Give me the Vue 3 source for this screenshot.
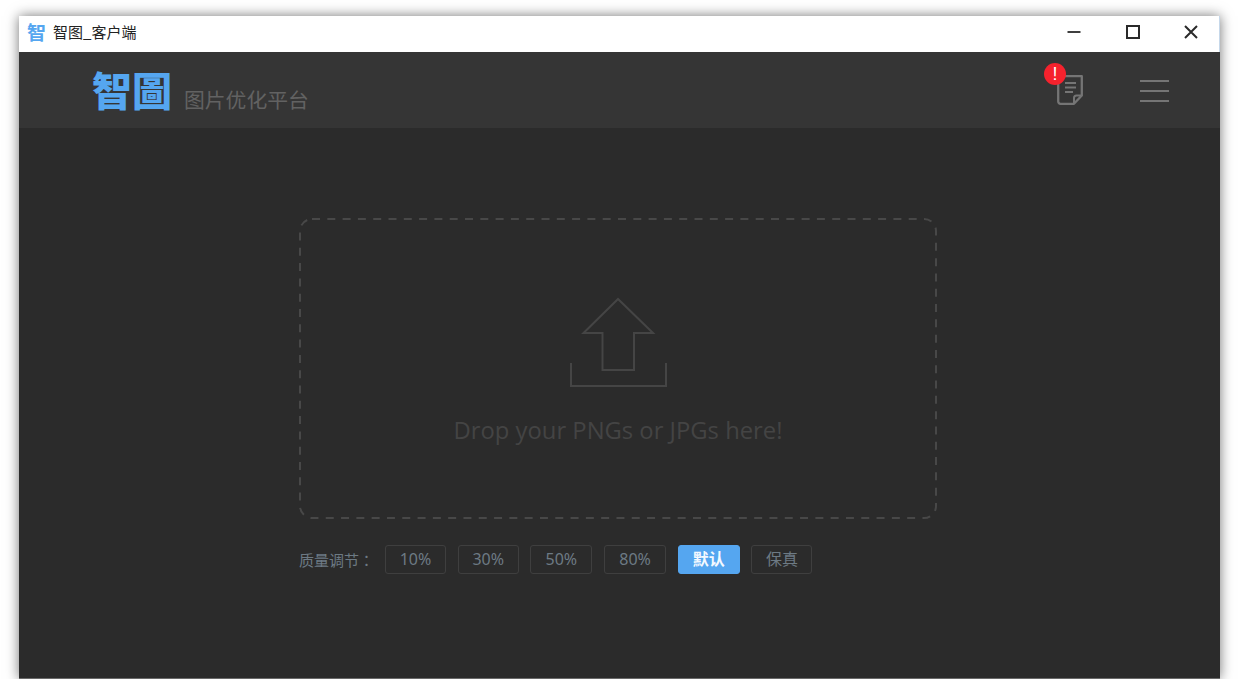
<script setup>
const levels = [
  { label: '10%', width: 61 },
  { label: '30%', width: 61 },
  { label: '50%', width: 62 },
  { label: '80%', width: 62 },
  { label: '默认', width: 62, active: true },
  { label: '保真', width: 61 },
]
</script>

<template>
  <div class="window">
    <div class="titlebar">
      <span class="app-icon">智</span>
      <span class="app-title">智图_客户端</span>
      <div class="controls">
        <svg width="14" height="14" viewBox="0 0 14 14"><path d="M0.5 7H13.5" /></svg>
        <svg width="14" height="14" viewBox="0 0 14 14"><rect x="1" y="1" width="12" height="12" /></svg>
        <svg width="14" height="14" viewBox="0 0 14 14"><path d="M1 1L13 13M13 1L1 13" /></svg>
      </div>
    </div>

    <header class="header">
      <div class="brand">
        <span class="brand-name">智圖</span>
        <span class="brand-sub">图片优化平台</span>
      </div>
      <div class="tools">
        <div class="doc">
          <svg width="26" height="30" viewBox="0 0 26 30" fill="none">
            <path d="M3.500 1.200H24.800V20.500L17 28.800H3.500A2.300 2.300 0 0 1 1.200 26.500V3.500A2.300 2.300 0 0 1 3.500 1.200Z" stroke="#757575" stroke-width="2.300" stroke-linejoin="round" />
            <path d="M24.800 20.500H19.500A2.500 2.500 0 0 0 17 23V28.800" stroke="#757575" stroke-width="2" />
            <path d="M8 8H19M8 12.500H19M8 17H16" stroke="#757575" stroke-width="2" />
          </svg>
          <span class="badge">!</span>
        </div>
        <svg class="menu" width="29" height="22" viewBox="0 0 29 22" fill="none">
          <path d="M0 1H29M0 11H29M0 21H29" stroke="#757575" stroke-width="2.200" />
        </svg>
      </div>
    </header>

    <main class="main">
      <div class="drop">
        <svg class="dash" width="638" height="301" viewBox="0 0 638 301" fill="none">
          <rect x="1" y="1" width="636" height="299" rx="12" stroke="#484848" stroke-width="2" stroke-dasharray="8 7.300" />
        </svg>
        <svg class="upload" width="98" height="90" viewBox="0 0 98 90" fill="none">
          <path d="M49 2L14.500 36H33.500V73H65V36H84L49 2Z" stroke="#454545" stroke-width="2" />
          <path d="M2 66V89H97V66" stroke="#454545" stroke-width="2" />
        </svg>
        <p class="hint">Drop your PNGs or JPGs here!</p>
      </div>

      <div class="quality">
        <span class="quality-label">质量调节：</span>
        <div class="options">
          <button
            v-for="level in levels"
            :key="level.label"
            class="option"
            :class="{ active: level.active }"
            :style="{ width: level.width + 'px' }"
          >{{ level.label }}</button>
        </div>
      </div>
    </main>
  </div>
</template>

<style>
html, body { margin: 0; background: #fff; }
</style>

<style scoped>
.window {
  width: 1201px;
  height: 663px;
  margin: 16px 0 0 19px;
  display: flex;
  flex-direction: column;
  box-shadow: 0 0 12px rgba(0, 0, 0, 0.55);
  font-family: "Noto Sans CJK SC", "Noto Sans", sans-serif;
  overflow: hidden;
}
.titlebar {
  height: 36px;
  flex: none;
  box-sizing: border-box;
  display: flex;
  align-items: center;
  background: #fff;
  padding: 0 0 5px 8px;
  box-shadow: inset -1px 0 0 #c6d8ea;
}
.app-icon {
  width: 19px;
  font-size: 19px;
  line-height: 1;
  font-weight: 700;
  color: #55a6f0;
}
.app-title {
  margin-left: 7px;
  font-size: 15px;
  color: #222;
  white-space: nowrap;
}
.controls {
  margin-left: auto;
  margin-right: 22px;
  display: flex;
  gap: 44.500px;
  fill: none;
  stroke: #2a2a2a;
  stroke-width: 2px;
}
.controls svg { display: block; }
.controls svg:first-child { stroke-width: 1.800px; }
.header {
  height: 76px;
  flex: none;
  display: flex;
  align-items: center;
  justify-content: space-between;
  background: #353535;
  padding: 0 51px 0 73px;
}
.brand {
  display: flex;
  align-items: flex-end;
  gap: 12px;
  margin-top: -3px;
}
.brand-name {
  font-family: "Noto Sans CJK TC", sans-serif;
  font-size: 40px;
  line-height: 50px;
  font-weight: 900;
  color: #55a6f0;
}
.brand-sub {
  font-size: 20.800px;
  line-height: 30px;
  color: #626262;
}
.tools {
  display: flex;
  align-items: center;
  gap: 57px;
  margin-top: -1px;
}
.doc {
  position: relative;
  width: 26px;
  height: 30px;
  margin-top: 1px;
}
.doc svg { display: block; }
.badge {
  position: absolute;
  left: -13px;
  top: -12px;
  width: 22px;
  height: 22px;
  border-radius: 50%;
  background: #f5222d;
  color: #fff;
  font-size: 18px;
  line-height: 22px;
  text-align: center;
  font-family: "Liberation Sans", sans-serif;
}
.menu {
  display: block;
  margin-top: 2px;
}
.main {
  flex: 1;
  background: #2b2b2b;
  padding: 90px 0 0 280px;
  box-shadow: inset 0 -1px 0 #6a6a6a;
}
.drop {
  position: relative;
  width: 638px;
  height: 301px;
  box-sizing: border-box;
  padding-top: 79px;
  display: flex;
  flex-direction: column;
  align-items: center;
}
.dash {
  position: absolute;
  left: 0;
  top: 0;
}
.upload { display: block; flex: none; }
.hint {
  margin: 28px 0 0;
  font-family: "Open Sans", "Noto Sans", sans-serif;
  font-size: 23.800px;
  line-height: 30px;
  color: #444;
  white-space: nowrap;
}
.quality {
  margin-top: 26px;
  display: flex;
  align-items: center;
  height: 29px;
}
.quality-label {
  width: 86px;
  flex: none;
  font-family: "Noto Sans CJK TC", sans-serif;
  font-size: 15px;
  color: #6d7a84;
  white-space: nowrap;
}
.options {
  display: flex;
  gap: 11.700px;
}
.option {
  height: 29px;
  padding: 0;
  box-sizing: border-box;
  border: 1px solid #3f3f3f;
  border-radius: 3px;
  background: transparent;
  color: #6d7a84;
  font-family: "Noto Sans", "Noto Sans CJK SC", sans-serif;
  font-size: 16px;
  line-height: 27px;
}
.option.active {
  background: #55a6f0;
  border-color: #55a6f0;
  color: #f4f9ff;
  font-weight: 700;
}
</style>
